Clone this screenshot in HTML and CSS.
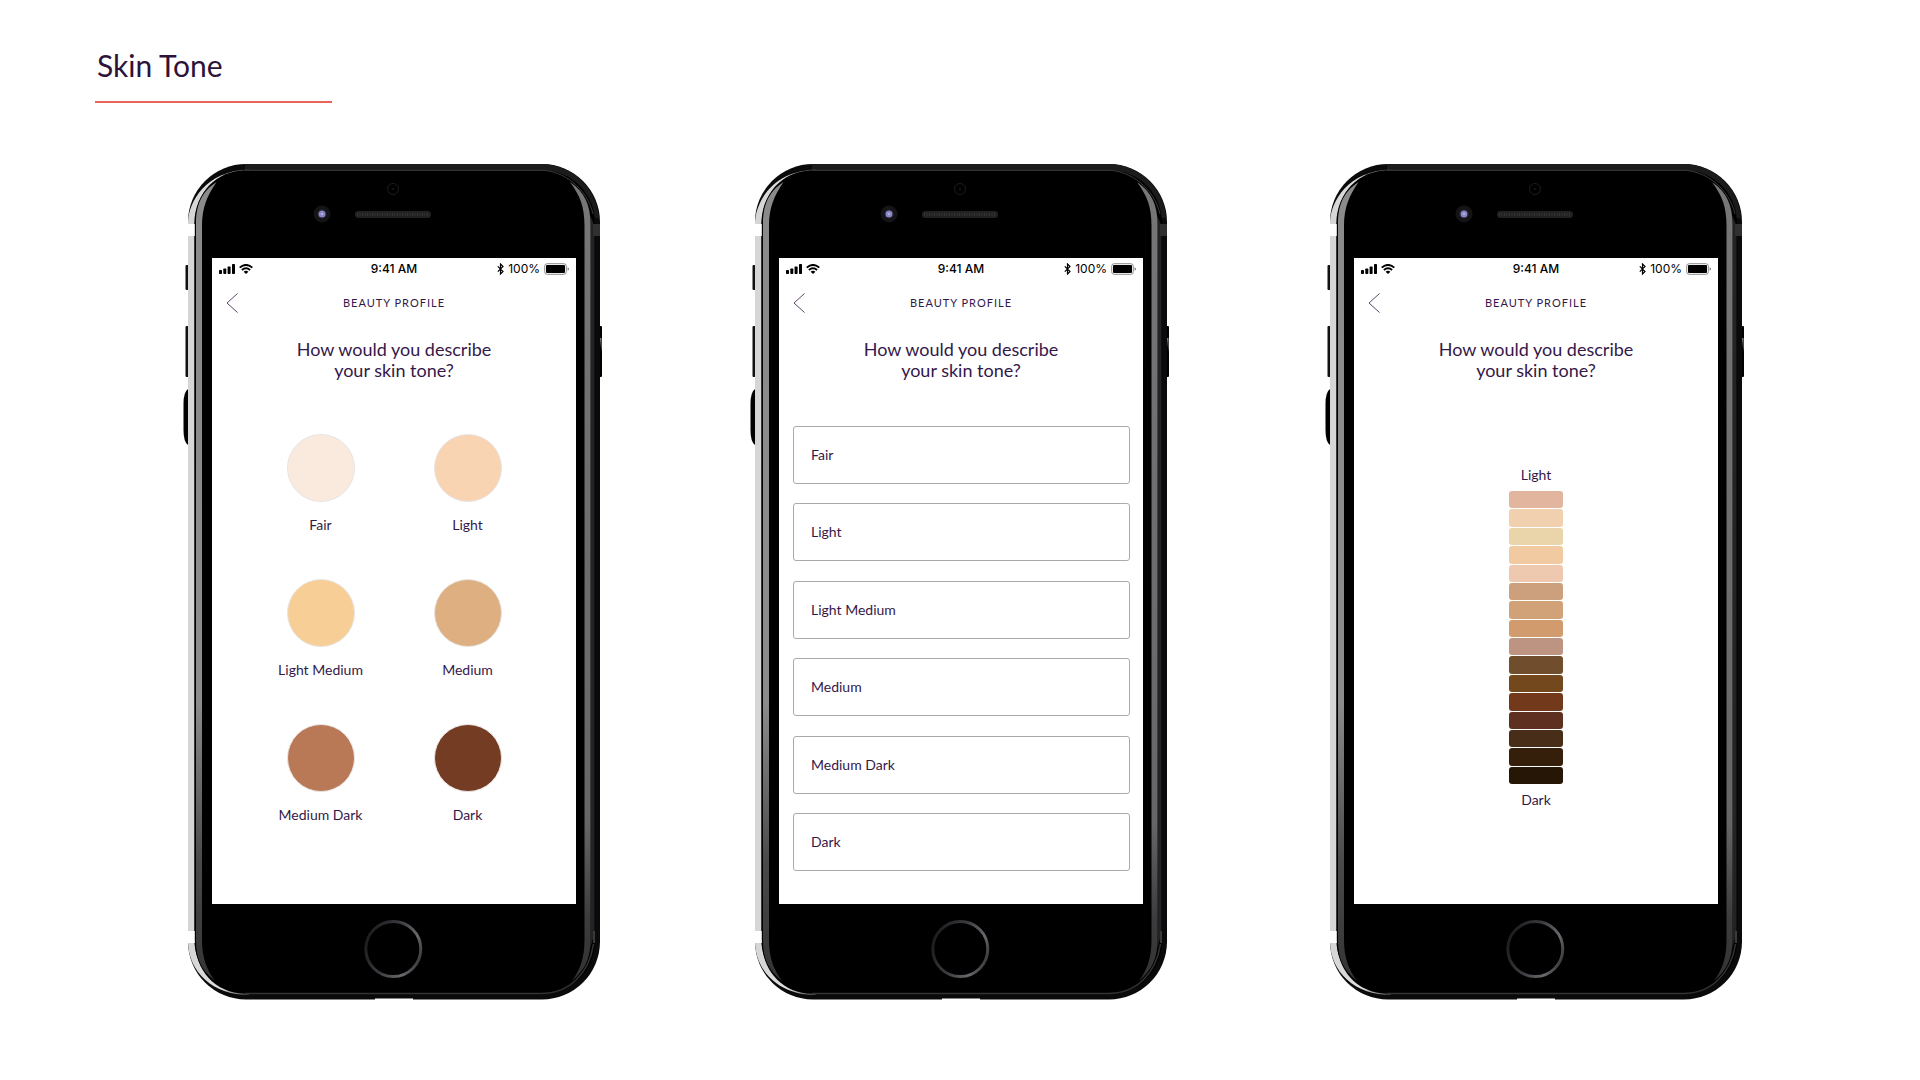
FILE: index.html
```html
<!DOCTYPE html>
<html lang="en">
<head>
    <meta charset="UTF-8">
    <meta name="viewport" content="width=device-width, initial-scale=1.0">
    <title>Skin Tone</title>
    <link rel="stylesheet" href="styles.css">
</head>
<body>

<!-- Shared drawings -->
<svg class="sprite" width="0" height="0" aria-hidden="true">
    <defs>
        <linearGradient id="edgeLeft" gradientUnits="userSpaceOnUse" x1="0" y1="18" x2="0" y2="818">
            <stop offset="0" stop-color="#8a8a8a"/>
            <stop offset="0.65" stop-color="#8c8c8c"/>
            <stop offset="0.85" stop-color="#4a4a4a"/>
            <stop offset="1" stop-color="#333"/>
        </linearGradient>
        <linearGradient id="edgeRight" gradientUnits="userSpaceOnUse" x1="0" y1="18" x2="0" y2="818">
            <stop offset="0" stop-color="#777"/>
            <stop offset="0.8" stop-color="#666"/>
            <stop offset="0.92" stop-color="#3c3c3c"/>
            <stop offset="1" stop-color="#333"/>
        </linearGradient>
        <linearGradient id="silver" gradientUnits="userSpaceOnUse" x1="4" y1="0" x2="66" y2="0">
            <stop offset="0" stop-color="#d5d5d5"/>
            <stop offset="0.55" stop-color="#dedede"/>
            <stop offset="1" stop-color="#333"/>
        </linearGradient>
        <linearGradient id="ring" x1="0" y1="0.3" x2="1" y2="0.7">
            <stop offset="0" stop-color="#1c1c1f"/>
            <stop offset="0.45" stop-color="#3c3c40"/>
            <stop offset="0.8" stop-color="#6a6a6e"/>
            <stop offset="1" stop-color="#38383b"/>
        </linearGradient>
    </defs>

    <symbol id="phone" viewBox="0 0 419 836">
        <!-- side buttons -->
        <rect x="2.5" y="101" width="3" height="25" rx="1" fill="#111"/>
        <rect x="2.5" y="162" width="3" height="51" rx="1" fill="#111"/>
        <path d="M5 225Q0.5 228 0.5 240V266Q0.5 278 5 281Z" fill="#000"/>
        <rect x="414" y="162" width="5" height="51" rx="1" fill="#000"/>
        <path d="M417 174h1.5v14z" fill="#888"/>
        <!-- body -->
        <rect x="5" y="0" width="412" height="835.5" rx="58" fill="#0a0a0a"/>
        <path d="M62 0H359A58 58 0 0 1 416 54L411 54A52 52 0 0 0 359 6H62Z" fill="#1b1b1b"/>
        <path d="M192 834.5H230V836H192Z" fill="#fff"/>
        <!-- silver edge -->
        <path d="M5 58C6 38 22 7 66 5.5L66 6.5C36 7 12 26 11.3 60V776C12 804 32 829 66 829.5V831C30 831 5.500 808 5 778Z" fill="url(#silver)"/>
        <rect x="5" y="60" width="7" height="12" fill="#fff"/>
        <rect x="5" y="767" width="7" height="12" fill="#fff"/>
        <!-- glass -->
        <path d="M62 6.5H358C390 6.5 412 30 412 60V776C412 806 390 829.5 358 829.5H62C32 829.5 11.8 806 11.8 776V60C11.8 28 34 6.5 62 6.5Z" fill="#000"/>
        <path d="M62 6.3H358C380 6.3 404 24 410 50" fill="none" stroke="#3c3c3c"/>
        <path d="M62 829.5H358C386 829.5 406 810 410.5 780" fill="none" stroke="#333" stroke-width="1.5"/>
        <path d="M407.5 52V784L411.5 768V62Z" fill="#222326"/>
        <rect x="410" y="60" width="7" height="12" fill="#303030"/>
        <rect x="410" y="767" width="2" height="12" fill="#3a3a3a"/>
        <!-- reflections -->
        <path d="M33.5 18C24 32 19 44 19 62V776C19 794 24 806 32 817C18 806 13 794 13 776V60C13 42 18 28 33.5 18Z" fill="url(#edgeLeft)"/>
        <path d="M387 18C397 32 401.5 42 401.5 62V776C401.5 794 397 806 389 817C402 806 407.5 794 407.5 776V60C407.5 42 402 28 387 18Z" fill="url(#edgeRight)"/>
        <!-- sensor, camera, speaker -->
        <circle cx="210" cy="25" r="5.5" fill="none" stroke="#1d1d1d"/>
        <circle cx="210" cy="25" r="1" fill="#1d1d1d"/>
        <circle cx="139" cy="50" r="8.5" fill="#141417"/>
        <circle cx="139" cy="50" r="5" fill="#1d1d24"/>
        <circle cx="139" cy="50" r="3.5" fill="#8984c4"/>
        <circle cx="139" cy="50" r="1.3" fill="#b0aede"/>
        <rect x="172" y="47" width="76" height="7" rx="3.5" fill="#222"/>
        <path d="M174 50.5H246" stroke="#333" stroke-width="3" stroke-dasharray="1 1.5"/>
        <!-- home button -->
        <circle cx="210.3" cy="785" r="27.5" fill="#000" stroke="url(#ring)" stroke-width="3"/>
    </symbol>

    <symbol id="signal" viewBox="0 0 16 10">
        <rect x="0" y="6" width="3" height="4" rx="0.7"/>
        <rect x="4.3" y="4.5" width="3" height="5.5" rx="0.7"/>
        <rect x="8.6" y="2.5" width="3" height="7.5" rx="0.7"/>
        <rect x="13" y="0" width="3" height="10" rx="0.7"/>
    </symbol>
    <symbol id="wifi" viewBox="0 0 14 10">
        <path d="M0.7 3.6Q7-1.8 13.3 3.6M2.9 6Q7 2.5 11.1 6" fill="none" stroke="#000" stroke-width="1.9"/>
        <path d="M4.6 7.7Q7 5.7 9.4 7.7L7 10Z"/>
    </symbol>
    <symbol id="bluetooth" viewBox="0 0 7 12">
        <path d="M0.8 3.3L6 8.5L3.5 11V1L6 3.5L0.8 8.7" fill="none" stroke="#000" stroke-width="1.2"/>
    </symbol>
    <symbol id="battery" viewBox="0 0 25 12">
        <rect x="0.7" y="0.7" width="21.6" height="10.6" rx="2.5" fill="none" stroke="#8c8c8c" stroke-width="1"/>
        <rect x="2" y="2" width="19" height="8" rx="1"/>
        <path d="M23.6 4.2Q25 4.8 25 6T23.6 7.8Z" fill="#777"/>
    </symbol>
    <symbol id="back" viewBox="0 0 12 20">
        <path d="M11.5 0.5L1 10L11.5 19.5" fill="none" stroke="#5b4568" stroke-width="1"/>
    </symbol>
</svg>

<header class="page-header">
    <h1>Skin Tone</h1>
</header>

<main class="phones">

    <!-- Option 1: circles -->
    <section class="phone">
        <svg class="phone-frame" aria-hidden="true"><use href="#phone"/></svg>
        <div class="screen">
            <div class="status-bar">
                <div class="status-left">
                    <svg width="16" height="10"><use href="#signal"/></svg>
                    <svg width="14" height="10"><use href="#wifi"/></svg>
                </div>
                <span class="time">9:41 AM</span>
                <div class="status-right">
                    <svg width="7" height="12"><use href="#bluetooth"/></svg>
                    <span>100%</span>
                    <svg width="25" height="12"><use href="#battery"/></svg>
                </div>
            </div>
            <div class="nav-bar">
                <button class="back" aria-label="Back"><svg width="12" height="20"><use href="#back"/></svg></button>
                <span class="nav-title">Beauty Profile</span>
            </div>
            <h2>How would you describe<br>your skin tone?</h2>
            <div class="circles">
                <button class="circle-option"><span class="circle fair"></span>Fair</button>
                <button class="circle-option"><span class="circle light"></span>Light</button>
                <button class="circle-option"><span class="circle light-medium"></span>Light Medium</button>
                <button class="circle-option"><span class="circle medium"></span>Medium</button>
                <button class="circle-option"><span class="circle medium-dark"></span>Medium Dark</button>
                <button class="circle-option"><span class="circle dark"></span>Dark</button>
            </div>
        </div>
    </section>

    <!-- Option 2: list -->
    <section class="phone">
        <svg class="phone-frame" aria-hidden="true"><use href="#phone"/></svg>
        <div class="screen">
            <div class="status-bar">
                <div class="status-left">
                    <svg width="16" height="10"><use href="#signal"/></svg>
                    <svg width="14" height="10"><use href="#wifi"/></svg>
                </div>
                <span class="time">9:41 AM</span>
                <div class="status-right">
                    <svg width="7" height="12"><use href="#bluetooth"/></svg>
                    <span>100%</span>
                    <svg width="25" height="12"><use href="#battery"/></svg>
                </div>
            </div>
            <div class="nav-bar">
                <button class="back" aria-label="Back"><svg width="12" height="20"><use href="#back"/></svg></button>
                <span class="nav-title">Beauty Profile</span>
            </div>
            <h2>How would you describe<br>your skin tone?</h2>
            <div class="list">
                <button class="list-option">Fair</button>
                <button class="list-option">Light</button>
                <button class="list-option">Light Medium</button>
                <button class="list-option">Medium</button>
                <button class="list-option">Medium Dark</button>
                <button class="list-option">Dark</button>
            </div>
        </div>
    </section>

    <!-- Option 3: scale -->
    <section class="phone">
        <svg class="phone-frame" aria-hidden="true"><use href="#phone"/></svg>
        <div class="screen">
            <div class="status-bar">
                <div class="status-left">
                    <svg width="16" height="10"><use href="#signal"/></svg>
                    <svg width="14" height="10"><use href="#wifi"/></svg>
                </div>
                <span class="time">9:41 AM</span>
                <div class="status-right">
                    <svg width="7" height="12"><use href="#bluetooth"/></svg>
                    <span>100%</span>
                    <svg width="25" height="12"><use href="#battery"/></svg>
                </div>
            </div>
            <div class="nav-bar">
                <button class="back" aria-label="Back"><svg width="12" height="20"><use href="#back"/></svg></button>
                <span class="nav-title">Beauty Profile</span>
            </div>
            <h2>How would you describe<br>your skin tone?</h2>
            <div class="scale">
                <span>Light</span>
                <div class="tones">
                    <button class="tone tone-1" aria-label="Tone 1"></button>
                    <button class="tone tone-2" aria-label="Tone 2"></button>
                    <button class="tone tone-3" aria-label="Tone 3"></button>
                    <button class="tone tone-4" aria-label="Tone 4"></button>
                    <button class="tone tone-5" aria-label="Tone 5"></button>
                    <button class="tone tone-6" aria-label="Tone 6"></button>
                    <button class="tone tone-7" aria-label="Tone 7"></button>
                    <button class="tone tone-8" aria-label="Tone 8"></button>
                    <button class="tone tone-9" aria-label="Tone 9"></button>
                    <button class="tone tone-10" aria-label="Tone 10"></button>
                    <button class="tone tone-11" aria-label="Tone 11"></button>
                    <button class="tone tone-12" aria-label="Tone 12"></button>
                    <button class="tone tone-13" aria-label="Tone 13"></button>
                    <button class="tone tone-14" aria-label="Tone 14"></button>
                    <button class="tone tone-15" aria-label="Tone 15"></button>
                    <button class="tone tone-16" aria-label="Tone 16"></button>
                </div>
                <span>Dark</span>
            </div>
        </div>
    </section>

</main>

</body>
</html>
```
FILE: styles.css
```css
* {
    box-sizing: border-box;
}
body {
    margin: 0;
    background: #fff;
    color: #35184a;
    font-family: Lato, sans-serif;
    font-size: 14px;
    line-height: 20px;
}
button {
    margin: 0;
    padding: 0;
    border: none;
    background: none;
    color: inherit;
    font: inherit;
    cursor: pointer;
}
.sprite {
    position: absolute;
}

/* Page title */
.page-header {
    padding: 47px 95px 0;
}
h1 {
    width: 237px;
    margin: 0;
    padding: 0 2px 18px;
    border-bottom: 2px solid #ea6557;
    color: #2d1239;
    font-size: 30px;
    font-weight: 400;
    line-height: 36px;
}

/* Phones */
.phones {
    display: grid;
    grid-template-columns: 567fr 575fr 419fr;
    padding: 61px 176px 0 183px;
}
.phone {
    display: grid;
    width: 419px;
}
.phone-frame {
    grid-area: 1 / 1;
    width: 419px;
    height: 836px;
}
.screen {
    grid-area: 1 / 1;
    display: flex;
    flex-direction: column;
    margin: 94px 26px 96px 29px;
    background: #fff;
}

/* Status bar */
.status-bar {
    display: grid;
    grid-template-columns: 1fr auto 1fr;
    align-items: center;
    height: 22px;
    padding: 0 7px;
    color: #000;
    font-family: Inter, sans-serif;
    font-size: 12px;
}
.status-left, .status-right {
    display: flex;
    align-items: center;
    gap: 4px;
}
.status-right {
    justify-content: flex-end;
}
.time {
    font-weight: 500;
}

/* Navigation */
.nav-bar {
    display: grid;
    grid-template-columns: 1fr auto 1fr;
    align-items: center;
    height: 46px;
    padding: 0 14px;
}
.back {
    justify-self: start;
    height: 20px;
}
.back svg {
    display: block;
}
.nav-title {
    font-size: 11px;
    letter-spacing: 1px;
    text-transform: uppercase;
}
h2 {
    margin: 13px 0 0;
    font-size: 18px;
    font-weight: 400;
    line-height: 21px;
    text-align: center;
}

/* Circles */
.circles {
    display: grid;
    grid-template-columns: 147px 147px;
    justify-content: center;
    gap: 44px 0;
    margin-top: 53px;
}
.circle-option {
    display: flex;
    flex-direction: column;
    align-items: center;
    gap: 13px;
}
.circle {
    width: 68px;
    height: 68px;
    border: 1px solid #e9e4e4;
    border-radius: 50%;
}
.fair { background: #faeadd; }
.light { background: #f8d4b3; }
.light-medium { background: #f7cf96; }
.medium { background: #deb081; }
.medium-dark { background: #b97957; }
.dark { background: #743c23; }

/* List */
.list {
    flex: 1;
    display: flex;
    flex-direction: column;
    justify-content: space-between;
    padding: 45px 13px 33px 14px;
}
.list-option {
    height: 58px;
    padding: 0 17px;
    border: 1px solid #aaa;
    border-radius: 3px;
    text-align: left;
}

/* Scale */
.scale {
    display: flex;
    flex-direction: column;
    align-items: center;
    gap: 6px;
    margin-top: 84px;
}
.tones {
    display: flex;
    flex-direction: column;
    gap: 1px;
    width: 54px;
    height: 293px;
}
.tone {
    flex: 1;
    border-radius: 3px;
}
.tone-1 { background: #e2b69e; }
.tone-2 { background: #f1d0b0; }
.tone-3 { background: #e9d5a9; }
.tone-4 { background: #f1caa1; }
.tone-5 { background: #efc9af; }
.tone-6 { background: #cca07c; }
.tone-7 { background: #d1a177; }
.tone-8 { background: #d19b6e; }
.tone-9 { background: #bd9481; }
.tone-10 { background: #704d2c; }
.tone-11 { background: #73481c; }
.tone-12 { background: #72391b; }
.tone-13 { background: #5d3020; }
.tone-14 { background: #482e18; }
.tone-15 { background: #351e0a; }
.tone-16 { background: #261606; }
```
